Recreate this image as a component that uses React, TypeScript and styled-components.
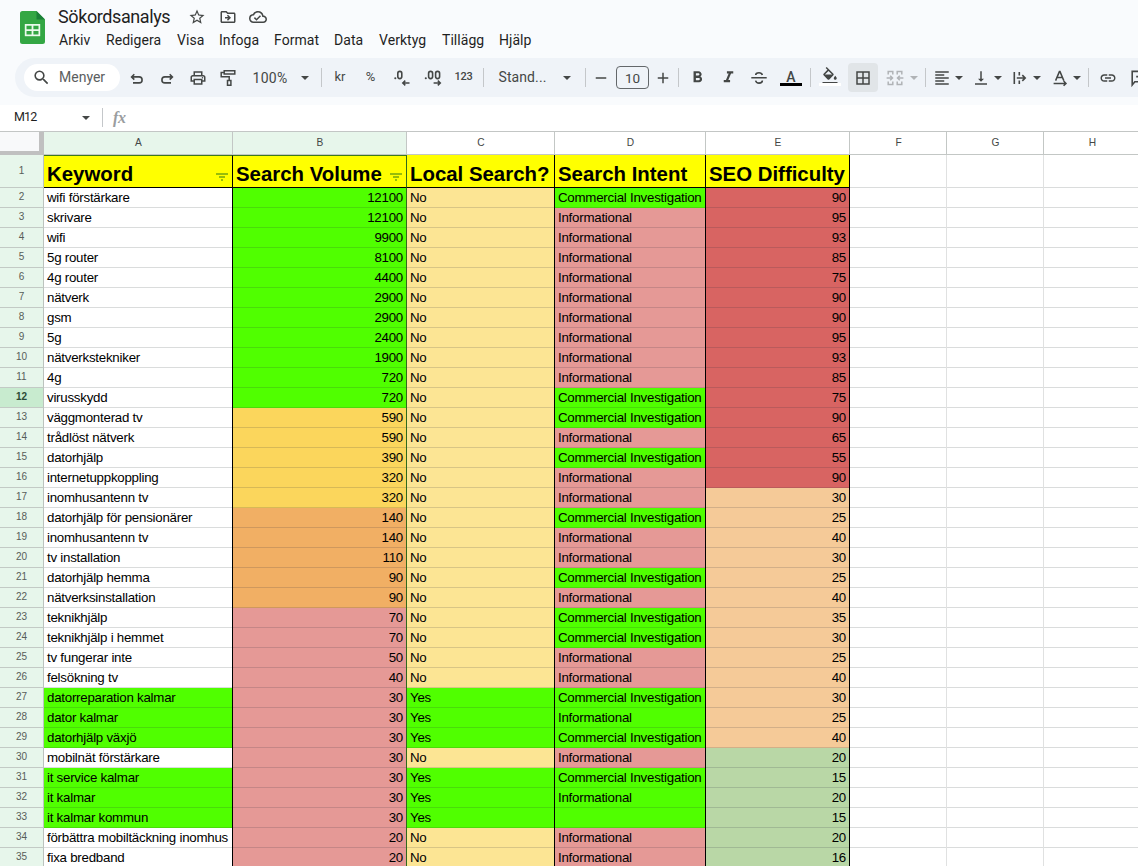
import React from "react";
import styled, { createGlobalStyle, css } from "styled-components";
import {
  MdStarBorder,
  MdOutlineDriveFileMove,
  MdOutlineCloudDone,
  MdSearch,
  MdOutlinePrint,
  MdBorderAll,
  MdFormatAlignLeft,
  MdVerticalAlignBottom,
  MdLink,
  MdFormatBold,
  MdFormatItalic,
  MdFormatColorFill,
  MdAdd,
  MdRemove,
} from "react-icons/md";

const GlobalStyle = createGlobalStyle`
  * { box-sizing: border-box; }
  html, body { margin: 0; padding: 0; overflow: hidden; background: #f9fbfd; }
`;

const Page = styled.div`
  width: 1138px;
  height: 866px;
  overflow: hidden;
  display: flex;
  flex-direction: column;
  background: #f9fbfd;
  font-family: Roboto, "Liberation Sans", sans-serif;
  color: #1f1f1f;
`;

/* ---------- document header ---------- */

const DocHeader = styled.header`
  height: 58px;
  flex: none;
  display: flex;
  padding-left: 20px;
`;

const Logo = styled.svg`
  width: 25px;
  height: 33px;
  margin-top: 11px;
  flex: none;
`;

const DocInfo = styled.div`
  margin-left: 13px;
  display: flex;
  flex-direction: column;
`;

const TitleRow = styled.div`
  height: 30px;
  padding-top: 4px;
  display: flex;
  align-items: center;
`;

const Title = styled.h1`
  margin: 0;
  width: 129px;
  font-size: 18px;
  font-weight: 400;
  line-height: 26px;
  letter-spacing: -0.4px;
  white-space: nowrap;
`;

const TitleIcon = styled.span<{ $w: number }>`
  width: ${(p) => p.$w}px;
  display: flex;
  justify-content: center;
  color: #444746;
  svg { width: 18px; height: 18px; }
`;

const MenuBar = styled.nav`
  display: flex;
  height: 20px;
  align-items: center;
`;

const MenuItem = styled.span<{ $w: number }>`
  width: ${(p) => p.$w}px;
  padding-left: 1px;
  font-size: 14px;
  line-height: 20px;
  letter-spacing: 0.05px;
  white-space: nowrap;
`;

/* ---------- toolbar ---------- */

const Toolbar = styled.div`
  height: 39px;
  flex: none;
  margin-left: 15px;
  padding-left: 9px;
  display: flex;
  align-items: center;
  overflow: hidden;
  background: #eff3f8;
  border-radius: 20px 0 0 20px;
  color: #444746;
`;

const SearchPill = styled.div`
  width: 96px;
  height: 27px;
  flex: none;
  border-radius: 14px;
  background: #fff;
  display: flex;
  align-items: center;
  padding: 0 0 1px 8px;
  gap: 8px;
  font-size: 14px;
  color: #5b5e60;
  svg { width: 19px; height: 19px; color: #444746; }
`;

const Slot = styled.div<{ $w: number; $ml?: number; $size?: number; $dim?: boolean; $lift?: number }>`
  position: relative;
  width: ${(p) => p.$w}px;
  margin-left: ${(p) => p.$ml ?? 0}px;
  padding-bottom: ${(p) => p.$lift ?? 0}px;
  height: 29px;
  flex: none;
  display: flex;
  align-items: center;
  justify-content: center;
  color: ${(p) => (p.$dim ? "#b0b3b6" : "#444746")};
  svg { width: ${(p) => p.$size ?? 18}px; height: ${(p) => p.$size ?? 18}px; flex: none; }
`;

const ActiveSlot = styled(Slot)`
  background: #e1e5e8;
  border-radius: 4px;
`;

const ToolText = styled.span<{ $size: number; $weight?: number; $ls?: number }>`
  font-size: ${(p) => p.$size}px;
  font-weight: ${(p) => p.$weight ?? 400};
  letter-spacing: ${(p) => p.$ls ?? 0}px;
  line-height: 18px;
  white-space: nowrap;
`;

const Divider = styled.i<{ $ml: number; $mr: number }>`
  width: 1px;
  height: 19px;
  flex: none;
  margin: 0 ${(p) => p.$mr}px 0 ${(p) => p.$ml}px;
  background: #c4c7ca;
`;

const CaretMark = styled.i<{ $dim?: boolean }>`
  width: 0;
  height: 0;
  border-left: 4px solid transparent;
  border-right: 4px solid transparent;
  border-top: 4px solid ${(p) => (p.$dim ? "#b0b3b6" : "#444746")};
`;

const SizeBox = styled.div`
  width: 33px;
  height: 23px;
  flex: none;
  border: 1px solid #63676a;
  border-radius: 4px;
  display: flex;
  align-items: center;
  justify-content: center;
  font-size: 13.5px;
`;

const ColorBar = styled.i<{ $c: string }>`
  position: absolute;
  left: 50%;
  bottom: 6px;
  width: 22px;
  height: 3px;
  margin-left: -11px;
  background: ${(p) => p.$c};
`;

/* ---------- formula bar ---------- */

const FormulaBar = styled.div`
  height: 26px;
  margin-top: 8px;
  flex: none;
  display: flex;
  align-items: center;
  background: #fff;
  padding: 0 0 1px 14px;
`;

const CellName = styled.span`
  width: 68px;
  font-size: 12.5px;
  line-height: 16px;
  letter-spacing: -0.8px;
  padding-bottom: 1px;
`;

const Fx = styled.span`
  font-family: "Liberation Serif", serif;
  font-style: italic;
  font-weight: 700;
  font-size: 16px;
  line-height: 18px;
  letter-spacing: -0.3px;
  color: #9a9da0;
`;

/* ---------- sheet grid ---------- */

const Sheet = styled.div`
  flex: none;
  width: 1141px;
  display: flex;
  flex-direction: column;
  background: #fff;
  font-family: "Liberation Sans", Arial, sans-serif;
  border-top: 1px solid #c3c6c5;
`;

const columns = "44px 189px 174px 148px 151px 144px 97px 97px 97px";

const HeadRow = styled.div`
  display: grid;
  grid-template-columns: ${columns};
  height: 23px;
`;

const Corner = styled.div`
  background: #f8f9fa;
  border-right: 5px solid #c0c0c0;
  border-bottom: 4px solid #c0c0c0;
`;

const ColHead = styled.div<{ $on?: boolean }>`
  display: flex;
  align-items: center;
  justify-content: center;
  border-right: 1px solid #c3c7c5;
  border-bottom: 1px solid #c3c7c5;
  background: ${(p) => (p.$on ? "#e7f6eb" : "#fff")};
  color: #444746;
  font-size: 10.2px;
  padding: 0 0 1px 1px;
`;

const Row = styled.div<{ $h: number }>`
  display: grid;
  grid-template-columns: ${columns};
  height: ${(p) => p.$h}px;
`;

const RowHead = styled.div<{ $active?: boolean }>`
  display: flex;
  align-items: center;
  justify-content: center;
  padding-bottom: 2px;
  border-right: 1px solid #bcc3be;
  border-bottom: 1px solid #c3cac5;
  background: ${(p) => (p.$active ? "#c8ebcf" : "#e7f6eb")};
  font-size: 10px;
  font-weight: ${(p) => (p.$active ? 700 : 400)};
  color: ${(p) => (p.$active ? "#2c4a36" : "#575d59")};
`;

const Cell = styled.div<{ $bg?: string; $edge?: string; $right?: boolean }>`
  background: ${(p) => p.$bg ?? "#fff"};
  border-right: 1px solid ${(p) => p.$edge ?? "#e0e1e1"};
  box-shadow: inset 0 -1px 0 ${(p) => (p.$bg ? "rgba(40, 40, 60, 0.17)" : "#dadcdc")};
  padding: 0 3px;
  font-size: 13.3px;
  letter-spacing: -0.24px;
  line-height: 19px;
  color: #000;
  white-space: nowrap;
  text-align: ${(p) => (p.$right ? "right" : "left")};
`;

const TitleCell = styled.div<{ $edge: string; $ranged?: boolean }>`
  display: flex;
  align-items: flex-end;
  justify-content: space-between;
  background: #ffff00;
  border-right: 1px solid ${(p) => p.$edge};
  border-bottom: 1px solid #000;
  ${(p) => p.$ranged && css`border-top: 1px solid #3d7a1e;`}
  padding: 0 4px 1px 3px;
  font-size: 20.4px;
  font-weight: 700;
  line-height: 24px;
  color: #000;
  white-space: nowrap;
`;

const FilterGlyph = styled.svg`
  width: 12px;
  height: 8px;
  flex: none;
  margin-bottom: 5px;
`;

const GREEN = "#50ff00";
const CREAM = "#fce594";
const PINK = "#e59996";
const GOLD = "#fbd65c";
const ORANGE = "#f1af64";
const RED = "#d86462";
const PEACH = "#f5ca98";
const SAGE = "#b9d7a6";
const FILTER_EDGE = "#2f6a1c";

type Entry = [string, number, "No" | "Yes", "C" | "I" | "", number];

const entries: Entry[] = [
  ["wifi förstärkare", 12100, "No", "C", 90],
  ["skrivare", 12100, "No", "I", 95],
  ["wifi", 9900, "No", "I", 93],
  ["5g router", 8100, "No", "I", 85],
  ["4g router", 4400, "No", "I", 75],
  ["nätverk", 2900, "No", "I", 90],
  ["gsm", 2900, "No", "I", 90],
  ["5g", 2400, "No", "I", 95],
  ["nätverkstekniker", 1900, "No", "I", 93],
  ["4g", 720, "No", "I", 85],
  ["virusskydd", 720, "No", "C", 75],
  ["väggmonterad tv", 590, "No", "C", 90],
  ["trådlöst nätverk", 590, "No", "I", 65],
  ["datorhjälp", 390, "No", "C", 55],
  ["internetuppkoppling", 320, "No", "I", 90],
  ["inomhusantenn tv", 320, "No", "I", 30],
  ["datorhjälp för pensionärer", 140, "No", "C", 25],
  ["inomhusantenn tv", 140, "No", "I", 40],
  ["tv installation", 110, "No", "I", 30],
  ["datorhjälp hemma", 90, "No", "C", 25],
  ["nätverksinstallation", 90, "No", "I", 40],
  ["teknikhjälp", 70, "No", "C", 35],
  ["teknikhjälp i hemmet", 70, "No", "C", 30],
  ["tv fungerar inte", 50, "No", "I", 25],
  ["felsökning tv", 40, "No", "I", 40],
  ["datorreparation kalmar", 30, "Yes", "C", 30],
  ["dator kalmar", 30, "Yes", "I", 25],
  ["datorhjälp växjö", 30, "Yes", "C", 40],
  ["mobilnät förstärkare", 30, "No", "I", 20],
  ["it service kalmar", 30, "Yes", "C", 15],
  ["it kalmar", 30, "Yes", "I", 20],
  ["it kalmar kommun", 30, "Yes", "", 15],
  ["förbättra mobiltäckning inomhus", 20, "No", "I", 20],
  ["fixa bredband", 20, "No", "I", 16],
];

const intentText = { C: "Commercial Investigation", I: "Informational", "": "" };
const volumeColor = (v: number) => (v >= 720 ? GREEN : v >= 320 ? GOLD : v >= 90 ? ORANGE : PINK);
const difficultyColor = (d: number) => (d >= 55 ? RED : d >= 25 ? PEACH : SAGE);

const Caret = ({ w, ml = 0, dim }: { w: number; ml?: number; dim?: boolean }) => (
  <Slot $w={w} $ml={ml}>
    <CaretMark $dim={dim} />
  </Slot>
);

const Filter = () => (
  <FilterGlyph viewBox="0 0 12 8">
    <path d="M0 1h12M3 4h6M5 7h2" stroke="#76a80c" strokeWidth="1.4" fill="none" />
  </FilterGlyph>
);

const stroke = { fill: "none", stroke: "currentColor", strokeWidth: 1.6 } as const;

const UndoIcon = () => (
  <svg viewBox="0 0 18 18" {...stroke}>
    <path d="M6.3 5.2 3.6 7.900l2.700 2.700M3.800 7.900h7.300a3 3 0 0 1 0 6H5" />
  </svg>
);

const RedoIcon = () => (
  <svg viewBox="0 0 18 18" {...stroke}>
    <path d="m11.700 5.200 2.700 2.700-2.700 2.700M14.200 7.900H6.900a3 3 0 0 0 0 6h6.100" />
  </svg>
);

const RollerIcon = () => (
  <svg viewBox="0 0 18 18" {...stroke} strokeWidth="1.5">
    <path d="M5.200 1.800h10.600v3.200H5.200zM5.200 3.400H2.200v4.300h8v3.600M8.500 11.500h3.400v4.700H8.500z" />
  </svg>
);

const LessDecimalIcon = () => (
  <svg viewBox="0 0 20 20" {...stroke}>
    <path d="M17.500 15H11M13.300 12.600l-2.500 2.400 2.500 2.400" strokeWidth="1.5" />
    <circle cx="3.300" cy="10.200" r="1.050" fill="currentColor" stroke="none" />
    <rect x="5.800" y="3.400" width="4" height="7.200" rx="2" />
  </svg>
);

const MoreDecimalIcon = () => (
  <svg viewBox="0 0 20 20" {...stroke}>
    <path d="M10.600 15h6.500M14.800 12.600l2.500 2.400-2.500 2.400" strokeWidth="1.5" />
    <circle cx="2.800" cy="10.200" r="1.050" fill="currentColor" stroke="none" />
    <rect x="5.600" y="3.400" width="4" height="7.200" rx="2" />
    <rect x="12.600" y="3.400" width="4" height="7.200" rx="2" />
  </svg>
);

const StrikeIcon = () => (
  <svg viewBox="0 0 18 18" {...stroke}>
    <path d="M1.300 8.800h15.400M12.400 5.900C11.900 4.400 10.700 3.700 9 3.700c-2 0-3.300 .9-3.300 2.300M5.600 11.600c.4 1.700 1.600 2.500 3.400 2.500 2 0 3.400-.9 3.400-2.600" />
  </svg>
);

const MergeIcon = () => (
  <svg viewBox="0 0 18 18" {...stroke} strokeWidth="1.5">
    <path d="M2.200 5.500V2.500h4.600v3M2.200 12.500v3h4.600v-3M11.200 5.500v-3h4.600v3M11.200 12.500v3h4.600v-3M.6 9h5.600M4.200 6.700 6.500 9l-2.300 2.300M17.400 9h-5.600M13.800 6.700 11.500 9l2.300 2.300" />
  </svg>
);

const OverflowIcon = () => (
  <svg viewBox="0 0 18 18" {...stroke}>
    <path d="M3.300 3v12M8.300 3v3.400M8.300 11.600V15M5.800 9h8.600M11.300 6.100 14.200 9l-2.900 2.900" />
  </svg>
);

const RotateIcon = () => (
  <svg viewBox="0 0 18 18" {...stroke} strokeWidth="1.5">
    <path d="M4.600 11.600 8.400 2.600h.6l3.800 9M6 8.600h5.400M2.600 14.400h12M12.600 12l2.400 2.400-2.400 2.400" />
  </svg>
);

const CommentIcon = () => (
  <svg viewBox="0 0 18 18" {...stroke}>
    <path d="M2.200 16V2.400h13.600v10.400H4.800zM9 4.800v5.600M6.200 7.600h5.600" />
  </svg>
);

const menu: [string, number][] = [
  ["Arkiv", 47],
  ["Redigera", 71],
  ["Visa", 42],
  ["Infoga", 55],
  ["Format", 60],
  ["Data", 45],
  ["Verktyg", 63],
  ["Tillägg", 57],
  ["Hjälp", 50],
];

export default function App() {
  return (
    <>
      <GlobalStyle />
      <Page>
        <DocHeader>
          <Logo viewBox="0 0 25 33">
            <path d="M2.500 0H16.500l8.500 8.500v22a2.500 2.500 0 0 1-2.500 2.500h-20A2.500 2.500 0 0 1 0 30.500V2.500A2.500 2.500 0 0 1 2.500 0z" fill="#34a744" />
            <path d="M16.500 0l8.500 8.500h-8.500z" fill="#1c8038" />
            <path d="M4.800 13h15.400v12.200H4.800z" fill="#eafaec" />
            <path d="M6.500 14.700h5.100v3.500H6.500zM13.400 14.700h5.100v3.500h-5.100zM6.500 20h5.100v3.500H6.500zM13.400 20h5.100v3.500h-5.100z" fill="#34a744" />
          </Logo>
          <DocInfo>
            <TitleRow>
              <Title>Sökordsanalys</Title>
              <TitleIcon $w={20}><MdStarBorder /></TitleIcon>
              <TitleIcon $w={41}><MdOutlineDriveFileMove /></TitleIcon>
              <TitleIcon $w={20}><MdOutlineCloudDone /></TitleIcon>
            </TitleRow>
            <MenuBar>
              {menu.map(([label, w]) => (
                <MenuItem key={label} $w={w}>{label}</MenuItem>
              ))}
            </MenuBar>
          </DocInfo>
        </DocHeader>

        <Toolbar>
          <SearchPill><MdSearch />Menyer</SearchPill>
          <Slot $w={31} $ml={1}><UndoIcon /></Slot>
          <Slot $w={30}><RedoIcon /></Slot>
          <Slot $w={31}><MdOutlinePrint /></Slot>
          <Slot $w={30}><RollerIcon /></Slot>
          <Slot $w={54}><ToolText $size={14} $ls={0.3}>100%</ToolText></Slot>
          <Caret w={15} />
          <Divider $ml={9} $mr={3} />
          <Slot $w={30} $lift={1}><ToolText $size={13}>kr</ToolText></Slot>
          <Slot $w={31} $lift={1}><ToolText $size={13}>%</ToolText></Slot>
          <Slot $w={31} $size={20}><LessDecimalIcon /></Slot>
          <Slot $w={31} $size={20}><MoreDecimalIcon /></Slot>
          <Slot $w={31} $lift={1}><ToolText $size={11} $weight={500} $ls={-0.3}>123</ToolText></Slot>
          <Divider $ml={4} $mr={5} />
          <Slot $w={67} $lift={1}><ToolText $size={14} $ls={0.1}>Stand...</ToolText></Slot>
          <Caret w={20} ml={1} />
          <Divider $ml={8} $mr={5} />
          <Slot $w={20}><MdRemove /></Slot>
          <Slot $w={33} $ml={5}><SizeBox>10</SizeBox></Slot>
          <Slot $w={20} $ml={4}><MdAdd /></Slot>
          <Divider $ml={5} $mr={3} />
          <Slot $w={30} $size={19}><MdFormatBold /></Slot>
          <Slot $w={32} $size={19}><MdFormatItalic /></Slot>
          <Slot $w={30}><StrikeIcon /></Slot>
          <Slot $w={32} $ml={1} $lift={2}><ToolText $size={14} $weight={500}>A</ToolText><ColorBar $c="#000" /></Slot>
          <Divider $ml={3} $mr={4} />
          <Slot $w={30} $lift={3}><MdFormatColorFill /><ColorBar $c="#fff" /></Slot>
          <ActiveSlot $w={30} $ml={3}><MdBorderAll /></ActiveSlot>
          <Slot $w={20} $ml={7} $dim><MergeIcon /></Slot>
          <Caret w={18} dim />
          <Divider $ml={2} $mr={6} />
          <Slot $w={20}><MdFormatAlignLeft /></Slot>
          <Caret w={14} />
          <Slot $w={20} $ml={5}><MdVerticalAlignBottom /></Slot>
          <Caret w={14} />
          <Slot $w={20} $ml={5}><OverflowIcon /></Slot>
          <Caret w={14} />
          <Slot $w={20} $ml={6}><RotateIcon /></Slot>
          <Caret w={14} />
          <Divider $ml={4} $mr={9} />
          <Slot $w={20}><MdLink /></Slot>
          <Slot $w={20} $ml={11}><CommentIcon /></Slot>
        </Toolbar>

        <FormulaBar>
          <CellName>M12</CellName>
          <CaretMark />
          <Divider $ml={12} $mr={10} />
          <Fx>fx</Fx>
        </FormulaBar>

        <Sheet>
          <HeadRow>
            <Corner />
            {["A", "B", "C", "D", "E", "F", "G", "H"].map((c) => (
              <ColHead key={c} $on={c === "A" || c === "B"}>{c}</ColHead>
            ))}
          </HeadRow>
          <Row $h={33}>
            <RowHead>1</RowHead>
            <TitleCell $edge="#000" $ranged>Keyword<Filter /></TitleCell>
            <TitleCell $edge={FILTER_EDGE} $ranged>Search Volume<Filter /></TitleCell>
            <TitleCell $edge="#000">Local Search?</TitleCell>
            <TitleCell $edge="#000">Search Intent</TitleCell>
            <TitleCell $edge="#000">SEO Difficulty</TitleCell>
            <Cell /><Cell /><Cell />
          </Row>
          {entries.map(([keyword, volume, local, intent, difficulty], i) => (
            <Row $h={20} key={i}>
              <RowHead $active={i === 10}>{i + 2}</RowHead>
              <Cell $edge="#000" $bg={local === "Yes" ? GREEN : undefined}>{keyword}</Cell>
              <Cell $edge={FILTER_EDGE} $bg={volumeColor(volume)} $right>{volume}</Cell>
              <Cell $edge="#000" $bg={local === "Yes" ? GREEN : CREAM}>{local}</Cell>
              <Cell $edge="#000" $bg={intent === "I" && local === "No" ? PINK : GREEN}>{intentText[intent]}</Cell>
              <Cell $edge="#000" $bg={difficultyColor(difficulty)} $right>{difficulty}</Cell>
              <Cell /><Cell /><Cell />
            </Row>
          ))}
        </Sheet>
      </Page>
    </>
  );
}
